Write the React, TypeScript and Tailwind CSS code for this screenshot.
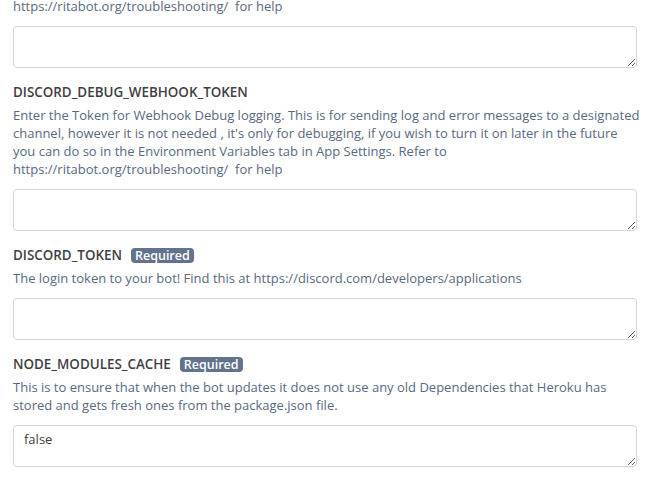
import React from 'react';

const fields = [
  {
    name: 'DISCORD_DEBUG_WEBHOOK_TOKEN',
    required: false,
    desc: [
      'Enter the Token for Webhook Debug logging. This is for sending log and error messages to a designated',
      "channel, however it is not needed , it's only for debugging, if you wish to turn it on later in the future",
      'you can do so in the Environment Variables tab in App Settings. Refer to',
      'https://ritabot.org/troubleshooting/  for help',
    ],
    value: '',
  },
  {
    name: 'DISCORD_TOKEN',
    required: true,
    desc: ['The login token to your bot! Find this at https://discord.com/developers/applications'],
    value: '',
  },
  {
    name: 'NODE_MODULES_CACHE',
    required: true,
    desc: [
      'This is to ensure that when the bot updates it does not use any old Dependencies that Heroku has',
      'stored and gets fresh ones from the package.json file.',
    ],
    value: 'false',
  },
];

const Box: React.FC<{ value: string }> = ({ value }) => (
  <textarea
    readOnly
    value={value}
    className="block w-[624px] h-[42px] mt-[11px] rounded-[4px] border border-[#cfd7e6] bg-white px-[10px] py-[4px] text-[13px] leading-[18px] text-[#3f3f44] outline-none resize-y"
  />
);

const App: React.FC = () => {
  return (
    <div className="w-[672px] h-[486px] overflow-hidden bg-white pl-[13px] text-[13px] leading-[18px] text-[#596981]" style={{ fontFamily: '"Open Sans", "Liberation Sans", sans-serif' }}>
      <div className="-mt-[3px] whitespace-pre">https://ritabot.org/troubleshooting/  for help</div>
      <Box value="" />
      {fields.map((f) => (
        <div key={f.name} className="mt-[15px]">
          <div className="flex items-center gap-[9px] h-[18px]">
            <span className="font-semibold text-[13.4px] text-[#3f3f44]">{f.name}</span>
            {f.required && (
              <span className="rounded-[4px] bg-[#62738d] px-[4px] text-[12.5px] leading-[15px] font-semibold text-white">Required</span>
            )}
          </div>
          <div className="mt-[5px]">
            {f.desc.map((l, i) => (
              <div key={i} className="whitespace-pre">{l}</div>
            ))}
          </div>
          <Box value={f.value} />
        </div>
      ))}
    </div>
  );
};

export default App;
